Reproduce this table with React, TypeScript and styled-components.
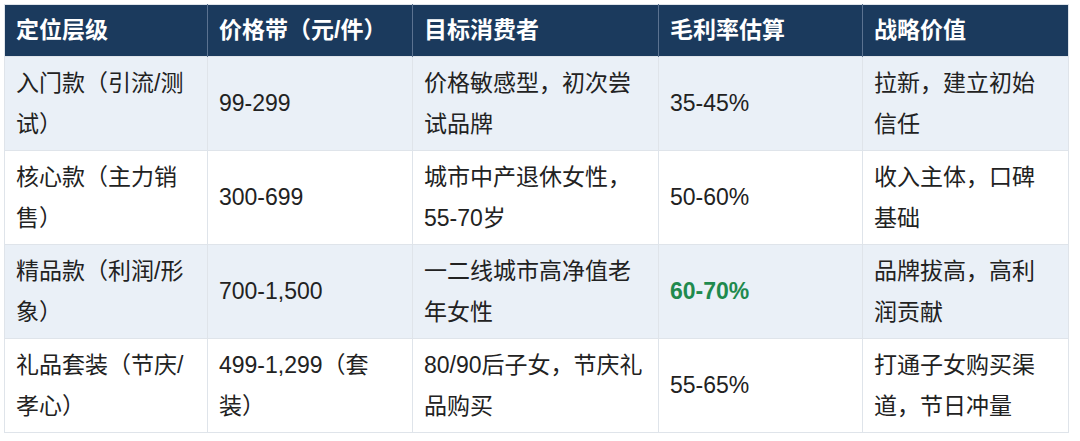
import styled, { createGlobalStyle } from "styled-components";

const GlobalStyle = createGlobalStyle`
  html, body {
    margin: 0;
    padding: 0;
    background: #ffffff;
  }
  body {
    font-family: "Liberation Sans", "Noto Sans CJK SC", sans-serif;
  }
`;

const Page = styled.div`
  padding: 4px 12px 0 4px;
`;

const Table = styled.table`
  width: 1064px;
  border-collapse: collapse;
  table-layout: fixed;
  font-size: 23px;
  line-height: 41px;
  color: #222222;
  border: 1px solid #dfe4ea;
`;

const HeadCell = styled.th`
  background-color: #1b3a5d;
  color: #ffffff;
  font-weight: 700;
  text-align: left;
  padding: 5px 11px;
  border-left: 1px solid #5b7290;
  &:first-child {
    border-left: none;
  }
`;

const Row = styled.tr<{ $shade: boolean }>`
  background-color: ${(props) => (props.$shade ? "#eaf0f7" : "#ffffff")};
`;

const Cell = styled.td<{ $highlight?: boolean }>`
  padding: 5.5px 11px;
  vertical-align: middle;
  border: 1px solid #dfe4ea;
  word-break: normal;
  color: ${(props) => (props.$highlight ? "#1f8a4e" : "#222222")};
  font-weight: ${(props) => (props.$highlight ? 700 : 400)};
`;

const columns = [
  { title: "定位层级", width: 203 },
  { title: "价格带（元/件）", width: 205 },
  { title: "目标消费者", width: 246 },
  { title: "毛利率估算", width: 204 },
  { title: "战略价值", width: 206 },
];

const rows = [
  {
    tier: "入门款（引流/测试）",
    price: "99-299",
    target: "价格敏感型，初次尝试品牌",
    margin: "35-45%",
    value: "拉新，建立初始信任",
  },
  {
    tier: "核心款（主力销售）",
    price: "300-699",
    target: "城市中产退休女性，55-70岁",
    margin: "50-60%",
    value: "收入主体，口碑基础",
  },
  {
    tier: "精品款（利润/形象）",
    price: "700-1,500",
    target: "一二线城市高净值老年女性",
    margin: "60-70%",
    value: "品牌拔高，高利润贡献",
    highlight: true,
  },
  {
    tier: "礼品套装（节庆/孝心）",
    price: "499-1,299（套装）",
    target: "80/90后子女，节庆礼品购买",
    margin: "55-65%",
    value: "打通子女购买渠道，节日冲量",
  },
];

const App = () => {
  return (
    <Page>
      <GlobalStyle />
      <Table>
        <colgroup>
          {columns.map((c) => (
            <col key={c.title} style={{ width: c.width }} />
          ))}
        </colgroup>
        <thead>
          <tr>
            {columns.map((c) => (
              <HeadCell key={c.title}>{c.title}</HeadCell>
            ))}
          </tr>
        </thead>
        <tbody>
          {rows.map((r, i) => (
            <Row key={r.tier} $shade={i % 2 === 0}>
              <Cell>{r.tier}</Cell>
              <Cell>{r.price}</Cell>
              <Cell>{r.target}</Cell>
              <Cell $highlight={r.highlight}>{r.margin}</Cell>
              <Cell>{r.value}</Cell>
            </Row>
          ))}
        </tbody>
      </Table>
    </Page>
  );
};

export default App;
